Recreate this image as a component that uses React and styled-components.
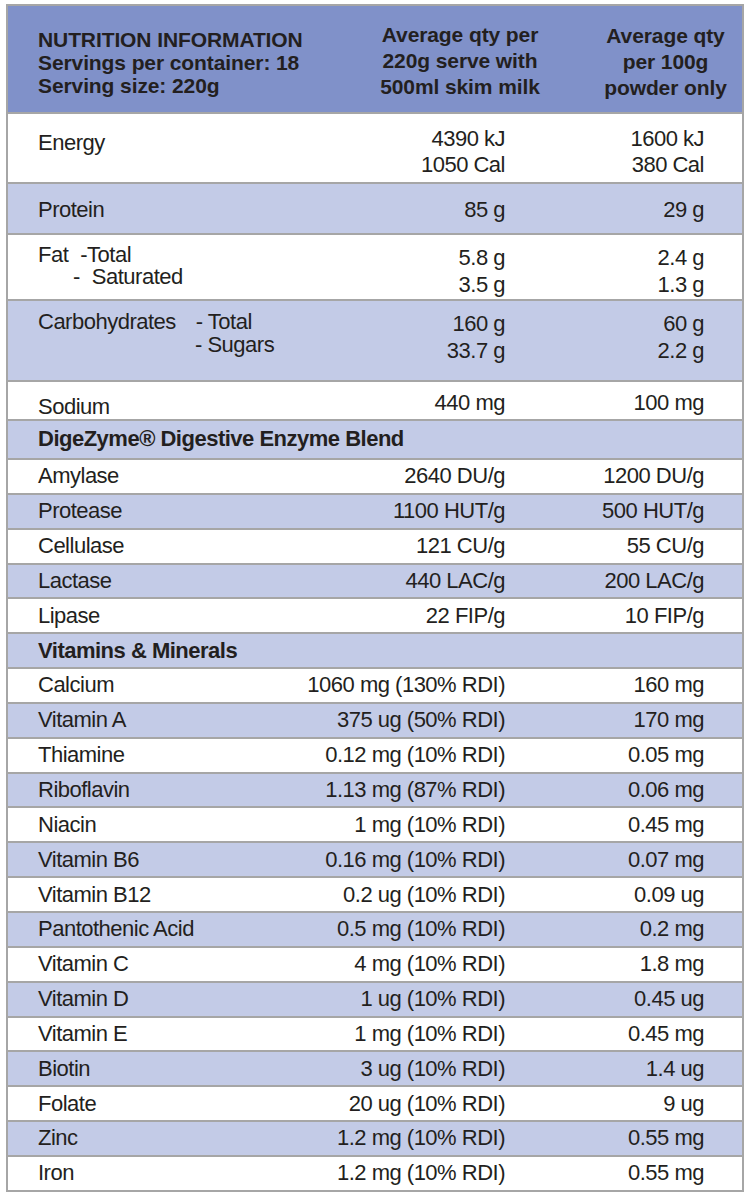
import React from "react";
import styled, { createGlobalStyle } from "styled-components";

const GlobalStyle = createGlobalStyle`
  body {
    margin: 0;
    background: #ffffff;
    font-family: "Liberation Sans", Arial, sans-serif;
    color: #231f20;
  }
`;

const tones = {
  head: "#8091c9",
  blue: "#c3cbe7",
  white: "#ffffff",
};

const Page = styled.div`
  padding: 4px 0 0 6px;
`;

const Table = styled.div`
  width: 738px;
  box-sizing: border-box;
  border: 2px solid #a6a6a6;
  border-bottom: none;
`;

const Row = styled.div`
  display: grid;
  grid-template-columns: 282px 275px 1fr;
  box-sizing: border-box;
  height: ${(p) => p.$h}px;
  align-items: ${(p) => (p.$center ? "center" : "start")};
  border-bottom: 2px solid #a6a6a6;
  background: ${(p) => tones[p.$tone] || tones.white};
`;

const Label = styled.div`
  padding-left: 30px;
  padding-top: ${(p) => p.$pt || 0}px;
  font-size: 22px;
  line-height: ${(p) => p.$lh || 22}px;
  letter-spacing: -0.5px;
  white-space: nowrap;
`;

const Section = styled(Label)`
  grid-column: 1 / -1;
  font-weight: 700;
`;

const Line = styled.div`
  display: flex;
`;

const Sub = styled.span`
  margin-left: ${(p) => p.$gap}px;
`;

const Value = styled.div`
  text-align: right;
  padding-right: ${(p) => (p.$col === 3 ? 38 : 60)}px;
  padding-top: ${(p) => p.$pt || 0}px;
  font-size: 22px;
  line-height: ${(p) => p.$lh || 22}px;
  letter-spacing: -0.5px;
  white-space: nowrap;
`;

const HeadTitle = styled.div`
  padding: 22px 0 0 30px;
  font-size: 21px;
  font-weight: 700;
  line-height: 23px;
  letter-spacing: -0.1px;
  white-space: nowrap;
`;

const HeadCol = styled.div`
  padding-top: ${(p) => p.$pt}px;
  padding-left: ${(p) => p.$pl}px;
  text-align: center;
  font-size: 21px;
  font-weight: 700;
  line-height: 26px;
  letter-spacing: -0.1px;
  white-space: nowrap;
`;

const enzymes = [
  ["Amylase", "2640 DU/g", "1200 DU/g"],
  ["Protease", "1100 HUT/g", "500 HUT/g"],
  ["Cellulase", "121 CU/g", "55 CU/g"],
  ["Lactase", "440 LAC/g", "200 LAC/g"],
  ["Lipase", "22 FIP/g", "10 FIP/g"],
];

const vitamins = [
  ["Calcium", "1060 mg (130% RDI)", "160 mg"],
  ["Vitamin A", "375 ug (50% RDI)", "170 mg"],
  ["Thiamine", "0.12 mg (10% RDI)", "0.05 mg"],
  ["Riboflavin", "1.13 mg (87% RDI)", "0.06 mg"],
  ["Niacin", "1 mg (10% RDI)", "0.45 mg"],
  ["Vitamin B6", "0.16 mg (10% RDI)", "0.07 mg"],
  ["Vitamin B12", "0.2 ug (10% RDI)", "0.09 ug"],
  ["Pantothenic Acid", "0.5 mg (10% RDI)", "0.2 mg"],
  ["Vitamin C", "4 mg (10% RDI)", "1.8 mg"],
  ["Vitamin D", "1 ug (10% RDI)", "0.45 ug"],
  ["Vitamin E", "1 mg (10% RDI)", "0.45 mg"],
  ["Biotin", "3 ug (10% RDI)", "1.4 ug"],
  ["Folate", "20 ug (10% RDI)", "9 ug"],
  ["Zinc", "1.2 mg (10% RDI)", "0.55 mg"],
  ["Iron", "1.2 mg (10% RDI)", "0.55 mg"],
];

const SMALL = 34.85;

function SmallRow({ item, tone }) {
  return (
    <Row $h={SMALL} $tone={tone} $center>
      <Label>{item[0]}</Label>
      <Value $col={2}>{item[1]}</Value>
      <Value $col={3}>{item[2]}</Value>
    </Row>
  );
}

export default function App() {
  return (
    <Page>
      <GlobalStyle />
      <Table>
        <Row $h={108} $tone="head">
          <HeadTitle>
            NUTRITION INFORMATION
            <br />
            Servings per container: 18
            <br />
            Serving size: 220g
          </HeadTitle>
          <HeadCol $pt={16} $pl={65}>
            Average qty per
            <br />
            220g serve with
            <br />
            500ml skim milk
          </HeadCol>
          <HeadCol $pt={17} $pl={24}>
            Average qty
            <br />
            per 100g
            <br />
            powder only
          </HeadCol>
        </Row>

        <Row $h={70} $tone="white">
          <Label $pt={18}>Energy</Label>
          <Value $col={2} $pt={12} $lh={26}>
            4390 kJ
            <br />
            1050 Cal
          </Value>
          <Value $col={3} $pt={12} $lh={26}>
            1600 kJ
            <br />
            380 Cal
          </Value>
        </Row>

        <Row $h={51} $tone="blue">
          <Label $pt={15}>Protein</Label>
          <Value $col={2} $pt={15}>85 g</Value>
          <Value $col={3} $pt={15}>29 g</Value>
        </Row>

        <Row $h={66} $tone="white">
          <Label $pt={9}>
            <Line>
              Fat<Sub $gap={12}>-Total</Sub>
            </Line>
            <Line>
              <Sub $gap={35}>-</Sub>
              <Sub $gap={12}>Saturated</Sub>
            </Line>
          </Label>
          <Value $col={2} $pt={9} $lh={27}>
            5.8 g
            <br />
            3.5 g
          </Value>
          <Value $col={3} $pt={9} $lh={27}>
            2.4 g
            <br />
            1.3 g
          </Value>
        </Row>

        <Row $h={81} $tone="blue">
          <Label $pt={9} $lh={23}>
            <Line>
              Carbohydrates<Sub $gap={20}>- Total</Sub>
            </Line>
            <Line>
              <Sub $gap={157}>- Sugars</Sub>
            </Line>
          </Label>
          <Value $col={2} $pt={9} $lh={27}>
            160 g
            <br />
            33.7 g
          </Value>
          <Value $col={3} $pt={9} $lh={27}>
            60 g
            <br />
            2.2 g
          </Value>
        </Row>

        <Row $h={39} $tone="white">
          <Label $pt={14}>Sodium</Label>
          <Value $col={2} $pt={10}>440 mg</Value>
          <Value $col={3} $pt={10}>100 mg</Value>
        </Row>

        <Row $h={39} $tone="blue">
          <Section $pt={7}>DigeZyme® Digestive Enzyme Blend</Section>
        </Row>

        {enzymes.map((item, i) => (
          <SmallRow key={item[0]} item={item} tone={i % 2 ? "blue" : "white"} />
        ))}

        <Row $h={SMALL} $tone="blue" $center>
          <Section>Vitamins &amp; Minerals</Section>
        </Row>

        {vitamins.map((item, i) => (
          <SmallRow key={item[0]} item={item} tone={i % 2 ? "blue" : "white"} />
        ))}
      </Table>
    </Page>
  );
}
